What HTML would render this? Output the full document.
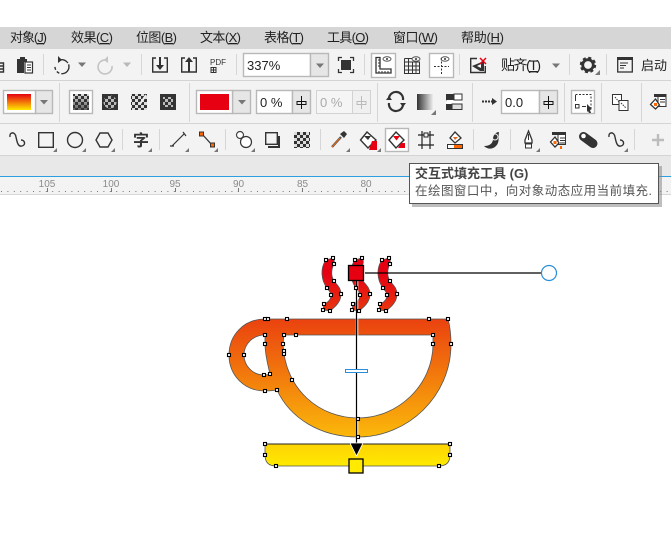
<!DOCTYPE html>
<html><head><meta charset="utf-8"><style>
html,body{margin:0;padding:0;background:#fff;width:671px;height:544px;overflow:hidden}
svg{display:block;font-family:"Liberation Sans","Noto Sans CJK SC",sans-serif}
.n rect{width:3px;height:3px;fill:#fff;stroke:#000;stroke-width:1.100}
.sep{stroke:#d6d6d6;stroke-width:1}
.m{font-size:13px;fill:#222}
.i{fill:none;stroke:#333;stroke-width:1.4}
.f{fill:#333}
.t{fill:#777}
.box{fill:#fff;stroke:#b8b8b8;stroke-width:1.4}
.btn{fill:#e6e6e6;stroke:#b8b8b8;stroke-width:1.4}
</style></head><body>
<svg width="671" height="544" viewBox="0 0 671 544" xmlns="http://www.w3.org/2000/svg">
<defs>
<linearGradient id="g" gradientUnits="userSpaceOnUse" x1="0" y1="273" x2="0" y2="466">
<stop offset="0" stop-color="#e60012"/><stop offset=".24" stop-color="#ea420f"/><stop offset=".85" stop-color="#fbb80a"/><stop offset=".89" stop-color="#fdd405"/><stop offset="1" stop-color="#ffea00"/>
</linearGradient>
<linearGradient id="sw" x1="0" y1="0" x2="0" y2="1"><stop offset="0" stop-color="#e60012"/><stop offset="1" stop-color="#ffea00"/></linearGradient>
<linearGradient id="gr" x1="0" y1="0" x2="1" y2="0"><stop offset="0" stop-color="#333"/><stop offset="1" stop-color="#eee"/></linearGradient>
<linearGradient id="dk" x1="0" y1="0" x2="0" y2="1"><stop offset="0" stop-color="#333" stop-opacity="0"/><stop offset="1" stop-color="#333" stop-opacity=".75"/></linearGradient>
<pattern id="ck" width="6" height="6" patternUnits="userSpaceOnUse"><rect width="6" height="6" fill="#333"/><rect width="3" height="3" fill="#ddd"/><rect x="3" y="3" width="3" height="3" fill="#ddd"/></pattern>
<path id="s1" d="M326 260L333 258Q335 261 334 264C331 270 331 276 334 281C337 285 341 288 341 294C341 302 335 307 330 311L323 310L324 304C329 302 331 299 331 295C331 292 328 290 327 288C321 280 320 268 326 260Z"/>
</defs>

<!-- chrome backgrounds -->
<rect x="0" y="27" width="671" height="22" fill="#d6d6d6"/>
<rect x="0" y="49" width="671" height="107" fill="#f3f3f3"/>
<rect x="0" y="80" width="671" height="1" fill="#d4d4d4"/>
<rect x="0" y="123" width="671" height="1" fill="#d4d4d4"/>
<rect x="0" y="155" width="671" height="1" fill="#d4d4d4"/>
<rect x="0" y="156" width="671" height="20" fill="#e8e8e8"/>
<rect x="0" y="176" width="671" height="1" fill="#2b9fe0"/>
<rect x="0" y="177" width="671" height="17" fill="#f3f3f3"/>
<rect x="0" y="194" width="671" height="1" fill="#d8d8d8"/>

<!-- menu -->
<g class="m">
<text x="10" y="42" textLength="37">对象(<tspan text-decoration="underline">J</tspan>)</text>
<text x="71" y="42" textLength="42">效果(<tspan text-decoration="underline">C</tspan>)</text>
<text x="136" y="42" textLength="41">位图(<tspan text-decoration="underline">B</tspan>)</text>
<text x="200" y="42" textLength="41">文本(<tspan text-decoration="underline">X</tspan>)</text>
<text x="264" y="42" textLength="40">表格(<tspan text-decoration="underline">T</tspan>)</text>
<text x="327" y="42" textLength="42">工具(<tspan text-decoration="underline">O</tspan>)</text>
<text x="393" y="42" textLength="45">窗口(<tspan text-decoration="underline">W</tspan>)</text>
<text x="461" y="42" textLength="43">帮助(<tspan text-decoration="underline">H</tspan>)</text>
</g>

<!-- toolbar 1 -->
<g>
<path class="i" d="M-2 63H3.5V72H-2M0 66H3M0 69H3"/>
<path class="f" d="M17 59H20V57H25V59H27V62H24V73H17Z"/>
<rect x="25" y="62" width="7.5" height="11" fill="#fff" stroke="#333" stroke-width="1.2"/>
<path stroke="#333" stroke-width="1" d="M27 65H31M27 67.500H31M27 70H31"/>
<line class="sep" x1="43.500" y1="54" x2="43.500" y2="75"/>
<path class="i" stroke-width="1.600" d="M60 60A7 7 0 1 1 55 66" stroke-dasharray="9 1.500 14 2 3 2 3"/>
<path class="f" d="M58 56V63L62 60Z"/>
<path class="t" d="M78 62.500H86L82 67Z"/>
<path fill="none" stroke="#c4c4c4" stroke-width="1.600" d="M106 60A7 7 0 1 0 112 66"/>
<path fill="#c4c4c4" d="M108 56V63L104 60Z"/>
<path fill="#b8b8b8" d="M123 62.500H131L127 67Z"/>
<line class="sep" x1="141.500" y1="54" x2="141.500" y2="75"/>
<path class="i" d="M156 58H152.700V72H167.300V58H164"/>
<path class="f" d="M159 57H161V65H164L160 70L156 65H159Z"/>
<path class="i" d="M185 58H181.700V72H196.300V58H193"/>
<path class="f" d="M188 72H190V62H193L189 57L185 62H188Z"/>
<text x="210" y="65" font-size="8" fill="#333" textLength="16">PDF</text>
<rect x="211" y="67.500" width="5" height="5" fill="none" stroke="#333"/>
<path stroke="#333" d="M213.500 67V73M211 70H216"/>
<line class="sep" x1="236.500" y1="54" x2="236.500" y2="75"/>
<rect class="box" x="243.500" y="53.500" width="67" height="23"/>
<rect class="btn" x="310.500" y="53.500" width="18" height="23"/>
<path class="t" d="M316 63.500H324L320 68Z"/>
<text x="247" y="70" font-size="13" fill="#222">337%</text>
<path fill="none" stroke="#333" stroke-width="1.300" d="M338.500 61V57.500H342M350 57.500H353.500V61M353.500 69V72.500H350M342 72.500H338.500V69"/>
<rect class="f" x="341" y="60" width="10" height="10"/>
<line class="sep" x1="364.500" y1="54" x2="364.500" y2="75"/>
<rect class="box" x="371.500" y="53.500" width="24" height="24"/>
<path fill="#fff" stroke="#333" stroke-width="1.300" d="M376 57.500H380V69H391V73H376Z"/>
<path stroke="#333" d="M378 60H380M378 63H380M378 66H380M379 71V73M382 71V73M385 71V73M388 71V73"/>
<ellipse cx="387" cy="59" rx="4" ry="2.200" fill="none" stroke="#555"/><circle cx="387" cy="59" r="1" fill="#333"/>
<path fill="none" stroke="#333" d="M404.500 58.500H412M404.500 62H419.500V73.500H404.500V58.500M408.500 58.500V73.500M412.500 62V73.500M416 62V73.500M404.500 66H419.500M404.500 70H419.500"/>
<ellipse cx="416" cy="59" rx="4" ry="2.200" fill="none" stroke="#555"/><circle cx="416" cy="59" r="1" fill="#333"/>
<rect class="box" x="429.500" y="53.500" width="24" height="24"/>
<path stroke="#333" stroke-dasharray="2 1.500" d="M441.500 58V74M434 66.500H449"/>
<ellipse cx="445" cy="59" rx="4" ry="2.200" fill="none" stroke="#555"/><circle cx="445" cy="59" r="1" fill="#333"/>
<line class="sep" x1="459.500" y1="54" x2="459.500" y2="75"/>
<path class="i" d="M477 58.500H470.700V72.500H485.300V66"/>
<path class="f" d="M472 66L484 61V71H480Z"/><path fill="#fff" d="M477 66L481 64V68Z"/>
<path stroke="#e60012" stroke-width="1.500" d="M480 58L486 64M486 58L480 64"/>
<text x="501" y="70" font-size="14" fill="#222" textLength="40">贴齐(<tspan text-decoration="underline">T</tspan>)</text>
<path class="t" d="M552 63.500H560L556 68Z"/>
<line class="sep" x1="569.500" y1="54" x2="569.500" y2="75"/>
<circle cx="588" cy="65" r="5.300" fill="none" stroke="#333" stroke-width="2.800"/>
<circle cx="588" cy="65" r="7" fill="none" stroke="#333" stroke-width="2.400" stroke-dasharray="3 2.500"/>
<path class="t" d="M595 75L600 70V75Z"/>
<line class="sep" x1="606.500" y1="54" x2="606.500" y2="75"/>
<rect x="617.700" y="58" width="14.600" height="14" fill="none" stroke="#333" stroke-width="1.300"/>
<path class="f" d="M617 57H633V60H617Z"/>
<path stroke="#333" d="M620 63H628M620 65.500H626M620 68H624"/>
<text x="641" y="70" font-size="13" fill="#222">启动</text>
</g>

<!-- toolbar 2 -->
<g>
<rect class="btn" x="35.500" y="90.500" width="17" height="23"/>
<rect class="box" x="3.500" y="90.500" width="32" height="23"/>
<rect x="7" y="94" width="24" height="16" fill="url(#sw)"/>
<path class="t" d="M40 100H48L44 104.500Z"/>
<line class="sep" x1="59.500" y1="83" x2="59.500" y2="122"/>
<rect class="box" x="69.500" y="90.500" width="23" height="23"/>
<rect x="73" y="94" width="16" height="16" fill="url(#ck)"/>
<rect x="73" y="94" width="16" height="16" fill="url(#dk)"/>
<rect x="102" y="94" width="16" height="16" fill="#333"/><circle cx="110" cy="102" r="6.500" fill="url(#ck)" opacity=".8"/>
<rect x="131" y="94" width="16" height="16" fill="url(#ck)"/><path d="M140 104L146 95" stroke="#eee" stroke-width="2"/>
<rect x="160" y="94" width="16" height="16" fill="#333"/><rect x="163" y="97" width="10" height="10" fill="url(#ck)" opacity=".8"/>
<line class="sep" x1="189.500" y1="83" x2="189.500" y2="122"/>
<rect class="btn" x="232.500" y="90.500" width="18" height="23"/>
<rect class="box" x="196.500" y="90.500" width="36" height="23"/>
<rect x="200" y="94" width="29" height="16" fill="#e60012"/>
<path class="t" d="M238 100H246L242 104.500Z"/>
<rect class="box" x="256.500" y="90.500" width="36" height="23"/>
<rect class="btn" x="292.500" y="90.500" width="18" height="23"/>
<text x="260" y="107" font-size="13" fill="#222">0 %</text>
<path stroke="#111" stroke-width="1" fill="none" d="M301.500 96V109M297 101.500H306V104.500H297Z"/>
<rect x="316.500" y="90.500" width="36" height="23" fill="#f5f5f5" stroke="#d2d2d2"/>
<rect x="352.500" y="90.500" width="18" height="23" fill="#f0f0f0" stroke="#d2d2d2"/>
<text x="320" y="107" font-size="13" fill="#aaa">0 %</text>
<path stroke="#bbb" stroke-width="1" fill="none" d="M361.500 96V109M357 101.500H366V104.500H357Z"/>
<line class="sep" x1="377.500" y1="83" x2="377.500" y2="122"/>
<path fill="none" stroke="#333" stroke-width="2.200" d="M389 98A7 7 0 0 1 403 100M403 105A7 7 0 0 1 389 103"/>
<path class="f" d="M386 100H392L389 96ZM400 103H406L403 107Z"/>
<rect x="417" y="94" width="16" height="16" fill="url(#gr)"/>
<path class="t" d="M431 115L436 110V115Z"/>
<rect x="446" y="94" width="16" height="6.500" fill="#333"/><rect x="446" y="104" width="16" height="6" fill="#333"/>
<rect x="446.600" y="100" width="15" height="4" fill="#fff"/><rect x="454" y="94" width="8" height="6" fill="#fff" stroke="#333"/><rect x="452" y="104" width="10" height="5.500" fill="#ddd" stroke="#333"/>
<line class="sep" x1="472.500" y1="83" x2="472.500" y2="122"/>
<path stroke="#333" stroke-width="2" stroke-dasharray="2 1" d="M482 101.500H492"/>
<path class="f" d="M492 98L497 101.500L492 105Z"/>
<rect class="box" x="501.500" y="90.500" width="38" height="23"/>
<rect class="btn" x="539.500" y="90.500" width="18" height="23"/>
<text x="505" y="107" font-size="13" fill="#222">0.0</text>
<path stroke="#111" stroke-width="1" fill="none" d="M548.500 96V109M544 101.500H553V104.500H544Z"/>
<line class="sep" x1="564.500" y1="83" x2="564.500" y2="122"/>
<rect class="box" x="571.500" y="90.500" width="23" height="23"/>
<path fill="none" stroke="#333" stroke-dasharray="2 1.500" d="M575.500 94.500H591V108"/>
<path fill="none" stroke="#333" d="M575.500 95V101M575.500 104.500H579V108H575.500ZM582 106.500H586"/>
<path class="f" d="M587 104L592 109L590 110L591 113L589 113L588 111L587 112Z"/>
<line class="sep" x1="601.500" y1="83" x2="601.500" y2="122"/>
<rect x="612.500" y="94.500" width="9" height="10" fill="#fff" stroke="#333"/><rect x="619" y="100.500" width="9" height="10" fill="#fff" stroke="#333"/>
<path stroke="#333" stroke-dasharray="1.500 1" d="M615 97L619 102M621 103L626 108"/>
<line class="sep" x1="641.500" y1="83" x2="641.500" y2="122"/>
<rect x="658" y="94.500" width="8" height="12" fill="#fff" stroke="#333"/><path class="f" d="M654 94H666V97H654Z"/><path stroke="#333" d="M660 99.500H665M660 102H665"/>
<path fill="#fff" stroke="#333" stroke-width="1.300" d="M655.500 99L659.500 105L655.500 109L650.500 104.500Z"/>
<rect x="654" y="103" width="3" height="3" fill="#f60"/>
</g>

<!-- toolbar 3 -->
<g>
<path class="i" stroke-width="1.800" d="M10 137C9 132 15 131 16 137C17 142 18 147 22 146C26 145 25 140 21 140"/>
<rect class="i" x="38.700" y="132.700" width="14.600" height="14.600"/>
<path class="t" d="M53 152L57 148V152Z"/>
<circle class="i" cx="75" cy="140" r="7.500"/>
<path class="t" d="M82 152L86 148V152Z"/>
<path class="i" d="M100 133H108L112 140L108 147H100L96 140Z"/>
<path class="t" d="M111 152L115 148V152Z"/>
<line class="sep" x1="122.500" y1="129" x2="122.500" y2="150"/>
<text x="133" y="146" font-size="16" font-weight="bold" fill="#333">字</text>
<path class="t" d="M148 152L152 148V152Z"/>
<line class="sep" x1="159.500" y1="129" x2="159.500" y2="150"/>
<path stroke="#333" stroke-width="1.200" d="M172 146L184 134M170 146H174M183 132L186 136"/>
<path class="t" d="M185 152L189 148V152Z"/>
<path stroke="#333" stroke-width="1.300" d="M202 134L212 145"/>
<rect x="199.500" y="132" width="4" height="4" fill="#f60" stroke="#333"/><rect x="210.500" y="143" width="4" height="4" fill="#f60" stroke="#333"/>
<path class="t" d="M214 152L218 148V152Z"/>
<line class="sep" x1="225.500" y1="129" x2="225.500" y2="150"/>
<circle cx="240" cy="135" r="3.500" fill="#fff" stroke="#444" stroke-width="1.200"/><circle cx="246" cy="142" r="5.500" fill="#fff" stroke="#333" stroke-width="1.200"/>
<path class="t" d="M251 152L255 148V152Z"/>
<rect class="i" x="265.700" y="132.700" width="11.600" height="11.600"/>
<path fill="none" stroke="#333" stroke-width="2" d="M279 136V147H268"/>
<rect x="294" y="132" width="16" height="16" fill="url(#ck)"/>
<line class="sep" x1="320.500" y1="129" x2="320.500" y2="150"/>
<path stroke="#555" stroke-width="2.400" d="M332 147L341 137"/>
<path stroke="#e06a1a" stroke-width="1.200" d="M332 147L340 138"/>
<path d="M340 134L344 138L347 134L344 131Z" fill="#333"/>
<path class="t" d="M346 152L350 148V152Z"/>
<path fill="#fff" stroke="#333" stroke-width="1.400" d="M367 132L376 140L368 148L360.500 140Z"/>
<path fill="#e60012" d="M372 141L377 141V150H369Z"/><path class="f" d="M364 136H371L368 140Z"/>
<path class="t" d="M377 152L381 148V152Z"/>
<rect class="box" x="385.500" y="128.500" width="23" height="23"/>
<path fill="#fff" stroke="#333" stroke-width="1.400" d="M396 132L404 140L396 148L389 140Z"/>
<path fill="#e60012" d="M393 136H400L396.500 140.500Z"/><path fill="#e60012" d="M401 143L405 143V148H398Z"/>
<path fill="none" stroke="#222" stroke-width="1.200" d="M418 135H434M418 145H434M422 131V149M430 131V149"/>
<rect x="424" y="133" width="4" height="4" fill="#f3f3f3" stroke="#222"/>
<path fill="#fff" stroke="#333" stroke-width="1.300" d="M455 132L461 138L455 143L450 138Z"/><path fill="#e06a1a" d="M453 137H458L455 140Z"/>
<rect x="447.500" y="144.500" width="15" height="4" fill="#f60" stroke="#333"/><rect x="448" y="145" width="6" height="3" fill="#fff"/>
<line class="sep" x1="473.500" y1="129" x2="473.500" y2="150"/>
<path class="f" d="M484 146C490 146 493 143 493 139C493 135 496 132 499 132C498 137 500 142 496 146C492 150 487 149 484 146Z"/>
<circle cx="495" cy="137" r="3" fill="none" stroke="#f3f3f3"/>
<line class="sep" x1="510.500" y1="129" x2="510.500" y2="150"/>
<path fill="#fff" stroke="#333" stroke-width="1.300" d="M528.500 131L532 140V143H525V140Z"/><rect x="525.500" y="144" width="6" height="4" fill="#fff" stroke="#333"/><path stroke="#333" d="M528.500 134V140"/>
<path class="t" d="M536 152L540 148V152Z"/>
<rect x="558" y="132.500" width="7.500" height="12" fill="#fff" stroke="#333"/><path class="f" d="M552 132H566V135H552Z"/><path stroke="#333" d="M560 138H565M560 140.500H565M560 143H565"/>
<path fill="#fff" stroke="#333" stroke-width="1.300" d="M555 137L559 143L555 147L550.500 142Z"/><rect x="553.500" y="141" width="3" height="3" fill="#f60"/><rect x="560" y="146" width="2" height="3" fill="#f60"/>
<path stroke="#333" stroke-width="9" stroke-linecap="round" d="M583.500 136.500L593 143.500"/>
<circle cx="583.500" cy="136" r="2.300" fill="#fff"/>
<path class="i" stroke-width="1.800" d="M609 137C608 132 614 131 615 137C616 142 617 147 621 146C625 145 624 140 620 140"/>
<path class="t" d="M624 152L628 148V152Z"/>
<line class="sep" x1="634.500" y1="129" x2="634.500" y2="150"/>
<path stroke="#bcbcbc" stroke-width="2.400" d="M658 134V146M652 140H664"/>
</g>

<!-- ruler -->
<g font-size="10" fill="#8a8a8a" text-anchor="middle" font-family="Liberation Sans">
<text x="47" y="187">105</text><text x="111" y="187">100</text><text x="175" y="187">95</text><text x="238.500" y="187">90</text><text x="302.500" y="187">85</text><text x="366" y="187">80</text>
</g>
<line x1="1" y1="191.500" x2="671" y2="191.500" stroke="#777" stroke-dasharray="1 5.400"/>
<path stroke="#777" d="M47.500 188V192M111.500 188V192M175.500 188V192M238.500 188V192M302.500 188V192M366.500 188V192"/>

<!-- drawing -->
<g fill="url(#g)" stroke="#555" stroke-width=".8">
<use href="#s1"/><use href="#s1" x="29"/><use href="#s1" x="56"/>
<path fill-rule="evenodd" d="M265 319L448 319Q451 330 451 344C451 396 408 437 358 437C320 437 290 418 277 390Q271 391 265 391C244 391 229 375 229 355C229 335 244 319 265 319ZM284 335L433 335L433 344C433 385 398 418 358 418C320 418 285 390 283 344ZM265 335C253 335 244 344 244 355C244 366 253 375 264 375Q267 375 270 374C267 362 265 350 265 344Z"/>
<path d="M265 444H450V455Q450 466 439 466H276Q265 466 265 455Z"/>
</g>
<path stroke="#222" stroke-width="1" d="M265 444H450"/>
<path stroke="#fff" stroke-width="3" opacity=".55" d="M357 281V443"/>
<path stroke="#000" stroke-width="1.200" d="M356.500 281V443M365 273H541"/>
<circle cx="549" cy="273" r="7.500" fill="#fff" stroke="#2a8fd8" stroke-width="1.200"/>
<rect x="345.500" y="369.500" width="22" height="3" fill="#fff" stroke="#2a8fd8"/>
<rect x="348.500" y="265.500" width="15" height="15" fill="#e60012" stroke="#000" stroke-width="1.300"/>
<g class="n" transform="translate(-1.500 -1.500)">
<rect x="326" y="260"/><rect x="333" y="258"/><rect x="334" y="264"/><rect x="334" y="281"/><rect x="327" y="288"/><rect x="331" y="295"/><rect x="341" y="294"/><rect x="324" y="304"/><rect x="323" y="310"/><rect x="330" y="311"/>
<rect x="355" y="260"/><rect x="362" y="258"/><rect x="356" y="288"/><rect x="360" y="295"/><rect x="370" y="294"/><rect x="353" y="304"/><rect x="352" y="310"/><rect x="359" y="311"/>
<rect x="382" y="260"/><rect x="389" y="258"/><rect x="390" y="264"/><rect x="390" y="281"/><rect x="383" y="288"/><rect x="387" y="295"/><rect x="397" y="294"/><rect x="380" y="304"/><rect x="379" y="310"/><rect x="386" y="311"/>
<rect x="265" y="319"/><rect x="268" y="319"/><rect x="287" y="319"/><rect x="429" y="319"/><rect x="448" y="319"/><rect x="451" y="344"/><rect x="433" y="335"/><rect x="433" y="344"/><rect x="296" y="335"/><rect x="284" y="335"/><rect x="283" y="344"/><rect x="284" y="351"/><rect x="284" y="354"/><rect x="292" y="380"/><rect x="265" y="335"/><rect x="265" y="344"/><rect x="229" y="355"/><rect x="244" y="355"/><rect x="264" y="375"/><rect x="270" y="374"/><rect x="265" y="391"/><rect x="277" y="390"/>
<rect x="358" y="419"/><rect x="358" y="437"/>
<rect x="265" y="444"/><rect x="450" y="444"/><rect x="450" y="455"/><rect x="265" y="455"/><rect x="276" y="466"/><rect x="439" y="466"/>
</g>
<path d="M350 443H363L356.500 456Z" fill="#000" stroke="#fff" stroke-width=".8"/>
<rect x="349" y="459" width="14" height="14" fill="#ffea00" stroke="#000" stroke-width="1.300"/>

<!-- tooltip -->
<rect x="412" y="166" width="250" height="41" fill="#888" opacity=".55"/>
<rect x="409.500" y="163.500" width="249" height="40" fill="#fff" stroke="#555"/>
<text x="415" y="178" font-size="13" font-weight="bold" fill="#444">交互式填充工具 (G)</text>
<text x="415" y="195" font-size="12.500" fill="#555" textLength="237">在绘图窗口中，向对象动态应用当前填充.</text>
</svg>
</body></html>
